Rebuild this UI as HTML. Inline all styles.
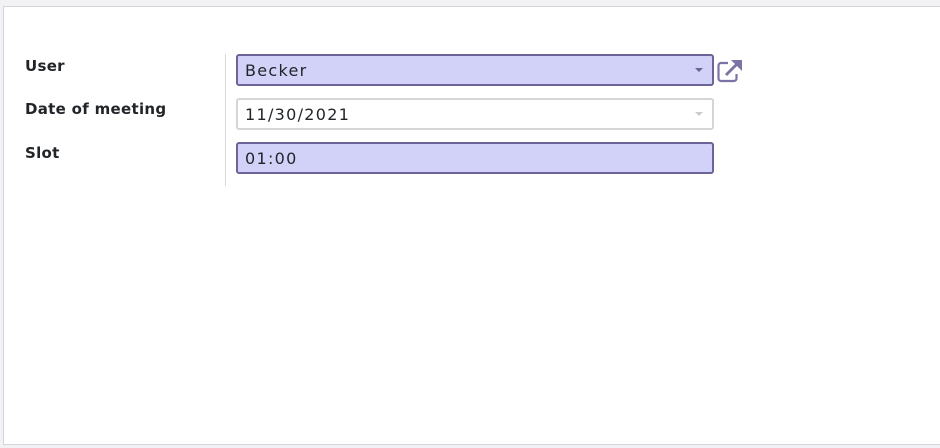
<!DOCTYPE html>
<html><head><style>
html,body{margin:0;padding:0;width:940px;height:448px;overflow:hidden;background:#f2f2f4;font-family:"DejaVu Sans",sans-serif;}
.sheet{position:absolute;left:3px;top:6px;width:960px;height:437px;background:#fff;border:1px solid #d4d4dc;border-right:none;}
.lbl{position:absolute;left:25px;font-weight:bold;font-size:15px;letter-spacing:0.3px;color:#212529;}
.vline{position:absolute;left:225px;top:54px;width:1px;height:132px;background:#d8d8d8;}
.inp{position:absolute;left:236px;width:478px;height:32px;box-sizing:border-box;border-radius:3px;font-size:16px;letter-spacing:1.3px;color:#212529;padding-left:7px;line-height:30px;}
.req{background:#d2d2f9;border:2px solid #6e6396;}
.plain{background:#fff;border:2px solid #d5d5d5;}
.caret{position:absolute;right:9px;top:12px;width:0;height:0;border-left:4px solid transparent;border-right:4px solid transparent;border-top:4px solid #6e6396;}
</style></head><body>
<div class="sheet"></div>
<div class="lbl" style="top:57px">User</div>
<div class="lbl" style="top:100px">Date of meeting</div>
<div class="lbl" style="top:144px">Slot</div>
<div class="vline"></div>
<div class="inp req" style="top:54px;line-height:29px">Becker<div class="caret"></div></div>
<div class="inp plain" style="top:98px">11/30/2021<div class="caret" style="border-top-color:#ccc"></div></div>
<div class="inp req" style="top:142px">01:00</div>
<svg style="position:absolute;left:716px;top:58px" width="28" height="26" viewBox="0 0 28 26">
<path d="M12 5H5a2.5 2.5 0 0 0-2.5 2.5v13A2.5 2.5 0 0 0 5 23h13a2.5 2.5 0 0 0 2.5-2.5V16" fill="none" stroke="#7b72a6" stroke-width="2.2"/>
<path d="M10 17L21 6" stroke="#7b72a6" stroke-width="2.8"/>
<path d="M15 2H26V13Z" fill="#7b72a6"/>
</svg>
</body></html>
